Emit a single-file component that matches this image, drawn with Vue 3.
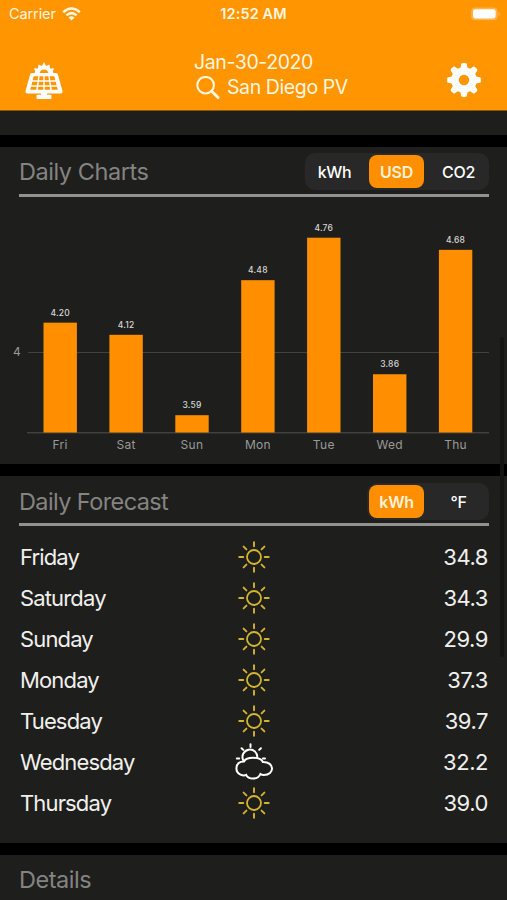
<template>
  <div class="app">
    <header class="header">
      <div class="status-bar">
        <div class="status-left">
          <span class="carrier">Carrier</span>
          <svg class="wifi" width="19" height="14" viewBox="0 0 19 14" fill="none" stroke="#fff6e0" stroke-width="2.6">
            <path d="M1.2 5.2Q9.5 -2.2 17.8 5.2" />
            <path d="M4.4 8.4Q9.5 3.9 14.6 8.4" />
            <path d="M9.5 13.6L6.5 10.6Q9.5 8 12.5 10.6Z" fill="#fff6e0" stroke="none" />
          </svg>
        </div>
        <div class="time">12:52 AM</div>
        <svg class="battery" width="30" height="14" viewBox="0 0 30 14">
          <rect x="0.2" y="0.4" width="26.4" height="12.8" rx="4" fill="#ffb24a" />
          <rect x="2" y="2.2" width="22.6" height="9.2" rx="2.4" fill="#fff" />
          <path d="M27.6 5v4q1.4-.6 1.4-2t-1.400-2z" fill="#ffb84f" />
        </svg>
      </div>
      <div class="nav-bar">
        <svg class="panel-icon" width="38" height="38" viewBox="0 0 38 38">
          <path
            d="M19 0l2 4 3.600-1.600.4 4 4-.1-1.300 3.700 1.300 1.500H9l1.300-1.500L9 6.300l4 .1.400-4L17 4z"
            fill="#fff"
          />
          <path d="M14.600 11a4.500 4.500 0 0 1 8.800 0z" fill="#ff9500" />
          <path d="M6.800 11h24.400q1.300 0 1.700 1.400l4.500 16.400q.5 2.700-1.800 2.700H2.400q-2.300 0-1.800-2.700l4.500-16.400Q5.500 11 6.800 11z" fill="#fff" />
          <g fill="#ff9500">
            <path d="M8.700 14.200h4.500l-.6 4H7.700zM14.600 14.200h3.700v4h-4.200zM19.700 14.200h3.700l.5 4h-4.200zM24.800 14.200h4.500l1 4h-4.900z" />
            <path d="M7.300 19.700h5.100l-.5 3.500H6.400zM13.900 19.700h4.400v3.500h-4.800zM19.700 19.700h4.400l.4 3.500h-4.800zM25.600 19.700h5.100l.9 3.500h-5.500z" />
            <path d="M6 24.700h5.700l-.5 3H5.200zM13.300 24.700h5v3h-5.400zM19.700 24.700h5l.4 3h-5.400zM26.300 24.700H32l.8 3h-6z" />
          </g>
          <path d="M16 31h6v1.800h3.500q1 0 1 1v2.200q0 1-1 1h-13q-1 0-1-1v-2.200q0-1 1-1H16z" fill="#fff" />
        </svg>
        <div class="nav-title">
          <div class="date">Jan-30-2020</div>
          <div class="site">
            <svg width="24" height="24" viewBox="0 0 24 24" fill="none" stroke="#fff6e0">
              <circle cx="9.600" cy="9.200" r="8.300" stroke-width="2" />
              <path d="M15.700 15.300L22 21.500" stroke-width="3" stroke-linecap="round" />
            </svg>
            <span>San Diego PV</span>
          </div>
        </div>
        <svg class="gear-icon" width="34" height="34" viewBox="-17 -17 34 34">
          <g fill="#fff">
            <path
              v-for="n in 8"
              :key="n"
              d="M-4-10L-2.800-15.800Q-2.500-16.900-1.400-16.900H1.400Q2.500-16.900 2.800-15.800L4-10z"
              :transform="`rotate(${n * 45})`"
            />
          </g>
          <circle r="9" fill="none" stroke="#fff" stroke-width="7.600" />
        </svg>
      </div>
    </header>

    <div class="previous-card"></div>

    <section class="card charts">
      <div class="card-header">
        <h2 class="charts-title">Daily Charts</h2>
        <div class="segmented">
          <button
            v-for="unit in chartUnits"
            :key="unit"
            :class="{ active: unit === chartUnit }"
            @click="chartUnit = unit"
          >{{ unit }}</button>
        </div>
      </div>
      <svg class="chart" width="507" height="267" viewBox="0 0 507 267">
        <path d="M28 155.500H489" stroke="#424240" />
        <text x="17" y="159.200" class="axis-label">4</text>
        <path d="M27 235.800H489" stroke="#50504e" />
        <g v-for="bar in bars" :key="bar.day">
          <rect :x="bar.x - 16.700" :y="bar.y" width="33.400" :height="235.500 - bar.y" fill="#ff8f00" />
          <text :x="bar.x" :y="bar.y - 6.800" class="bar-value">{{ bar.value.toFixed(2) }}</text>
          <text :x="bar.x" y="252.200" class="axis-label">{{ bar.day }}</text>
        </g>
      </svg>
    </section>

    <section class="card forecast">
      <div class="card-header">
        <h2 class="forecast-title">Daily Forecast</h2>
        <div class="segmented">
          <button
            v-for="unit in forecastUnits"
            :key="unit"
            :class="{ active: unit === forecastUnit }"
            @click="forecastUnit = unit"
          >{{ unit }}</button>
        </div>
      </div>
      <ul class="days">
        <li v-for="item in forecast" :key="item.day">
          <span class="day">{{ item.day }}</span>
          <svg v-if="item.icon === 'sun'" width="40" height="40" viewBox="-20 -20 40 40" fill="none" stroke="#d3b52f">
            <circle r="7" stroke-width="1.800" />
            <path
              v-for="n in 8"
              :key="n"
              d="M0-10.700V-14.700"
              stroke-width="1.900"
              stroke-linecap="round"
              :transform="`rotate(${n * 45})`"
            />
          </svg>
          <svg v-else width="40" height="40" viewBox="-20 -20 40 40" fill="none" stroke="#fff" stroke-width="2" stroke-linecap="round">
            <path d="M-3.500-17.700V-15M-12.400-13.800L-10.700-12.100M5.200-12.100L6.900-13.800M-17.200-3.600H-14.800M8.900-3.600H11" />
            <path d="M-10.600-1.500A7.400 7.400 0 1 1 3.200-4" />
            <path d="M-10-.6C-7.400-5.400 6.300-5.600 8.900 0C20.900-.3 20.900 13 9.800 13C8.300 13 7.200 12.600 6.400 12C4 18-5.400 18-7.800 12.900C-10 14-17.600 13.200-17.600 6.300C-17.600 1.800-14-.8-10-.6Z" />
          </svg>
          <span class="amount">{{ item.value.toFixed(1) }}</span>
        </li>
      </ul>
      <div class="scrollbar"></div>
    </section>

    <section class="card details">
      <h2 class="details-title">Details</h2>
    </section>
  </div>
</template>

<script setup>
import { ref, computed } from "vue";

const chartUnits = ["kWh", "USD", "CO2"];
const chartUnit = ref("USD");
const forecastUnits = ["kWh", "°F"];
const forecastUnit = ref("kWh");

const savings = [
  { day: "Fri", value: 4.2 },
  { day: "Sat", value: 4.12 },
  { day: "Sun", value: 3.59 },
  { day: "Mon", value: 4.48 },
  { day: "Tue", value: 4.76 },
  { day: "Wed", value: 3.86 },
  { day: "Thu", value: 4.68 },
];

const bars = computed(() =>
  savings.map((item, i) => ({
    ...item,
    x: 60.2 + i * 65.9,
    y: 156 - (item.value - 4) * 151.7,
  }))
);

const forecast = [
  { day: "Friday", icon: "sun", value: 34.8 },
  { day: "Saturday", icon: "sun", value: 34.3 },
  { day: "Sunday", icon: "sun", value: 29.9 },
  { day: "Monday", icon: "sun", value: 37.3 },
  { day: "Tuesday", icon: "sun", value: 39.7 },
  { day: "Wednesday", icon: "cloud", value: 32.2 },
  { day: "Thursday", icon: "sun", value: 39.0 },
];
</script>

<style>
body {
  margin: 0;
  background: #000;
}
</style>

<style scoped>
.app {
  position: relative;
  width: 507px;
  height: 900px;
  overflow: hidden;
  background: #000;
  font-family: Inter, "Liberation Sans", sans-serif;
}

.header {
  height: 111px;
  box-sizing: border-box;
  background: #ff9500;
  border-bottom: 1px solid #8a560c;
  color: #fff6e0;
}

.status-bar {
  display: grid;
  grid-template-columns: 1fr auto 1fr;
  align-items: center;
  height: 27px;
  padding: 0 6px 0 9px;
}

.status-left {
  display: flex;
  align-items: center;
  gap: 6px;
}

.carrier {
  font-size: 14.5px;
  letter-spacing: -0.1px;
}

.time {
  font-size: 14.5px;
  font-weight: 600;
  letter-spacing: 0.1px;
  margin-left: -3px;
}

.battery {
  justify-self: end;
}

.nav-bar {
  display: flex;
  padding: 22px 26px 0 25px;
}

.panel-icon {
  margin-top: 13px;
}

.nav-title {
  flex: 1;
  margin-left: 131px;
  padding-top: 1px;
  font-size: 19.5px;
  line-height: 25px;
  letter-spacing: -0.4px;
}

.site {
  display: flex;
  align-items: center;
  gap: 7px;
  padding-left: 2px;
}

.gear-icon {
  margin-top: 14px;
}

.previous-card {
  height: 24px;
  background: #1e1e1c;
}

.card {
  margin-top: 12px;
  background: #1e1e1c;
}

.card-header {
  display: flex;
  justify-content: space-between;
  align-items: flex-start;
  height: 47px;
  margin: 0 18px 0 19px;
  border-bottom: 3px solid #92928f;
}

h2 {
  margin: 0;
  color: #848482;
  font-size: 23.5px;
  font-weight: 400;
  line-height: 50px;
  letter-spacing: -0.45px;
}

.forecast-title {
  line-height: 51px;
  letter-spacing: -0.6px;
}

.segmented {
  display: flex;
  gap: 7px;
  margin-top: 6px;
  padding: 2px 3px 2px 2px;
  border-radius: 10px;
  background: #282828;
}

.segmented button {
  width: 55px;
  height: 33px;
  padding: 0;
  border: 0;
  border-radius: 8px;
  background: none;
  color: #fff;
  font-family: inherit;
  font-size: 16px;
  font-weight: 500;
  letter-spacing: -0.3px;
}

.segmented button.active {
  background: #ff8f00;
  color: #fff2d8;
  font-weight: 600;
}

.charts {
  height: 317px;
}

.chart {
  display: block;
}

.axis-label {
  fill: #9a9a98;
  font-size: 12px;
  letter-spacing: 0.3px;
  text-anchor: middle;
}

.bar-value {
  fill: #d8d8d6;
  font-size: 8.500px;
  font-weight: 500;
  letter-spacing: 0.2px;
  text-anchor: middle;
}

.forecast {
  height: 367px;
}

.forecast .segmented {
  margin-top: 7px;
}

.days {
  margin: 0;
  padding: 10px 19px 0 20px;
  list-style: none;
}

.days li {
  display: grid;
  grid-template-columns: 1fr 40px 1fr;
  align-items: center;
  height: 41.150px;
  color: #f0f0ee;
  font-size: 22px;
}

.day {
  letter-spacing: -0.85px;
}

.amount {
  text-align: right;
  letter-spacing: -0.45px;
}

.scrollbar {
  position: absolute;
  top: 337px;
  right: 3px;
  width: 4px;
  height: 320px;
  border-radius: 2px;
  background: #151514;
}

.details {
  height: 45px;
  padding-left: 19px;
}
</style>
